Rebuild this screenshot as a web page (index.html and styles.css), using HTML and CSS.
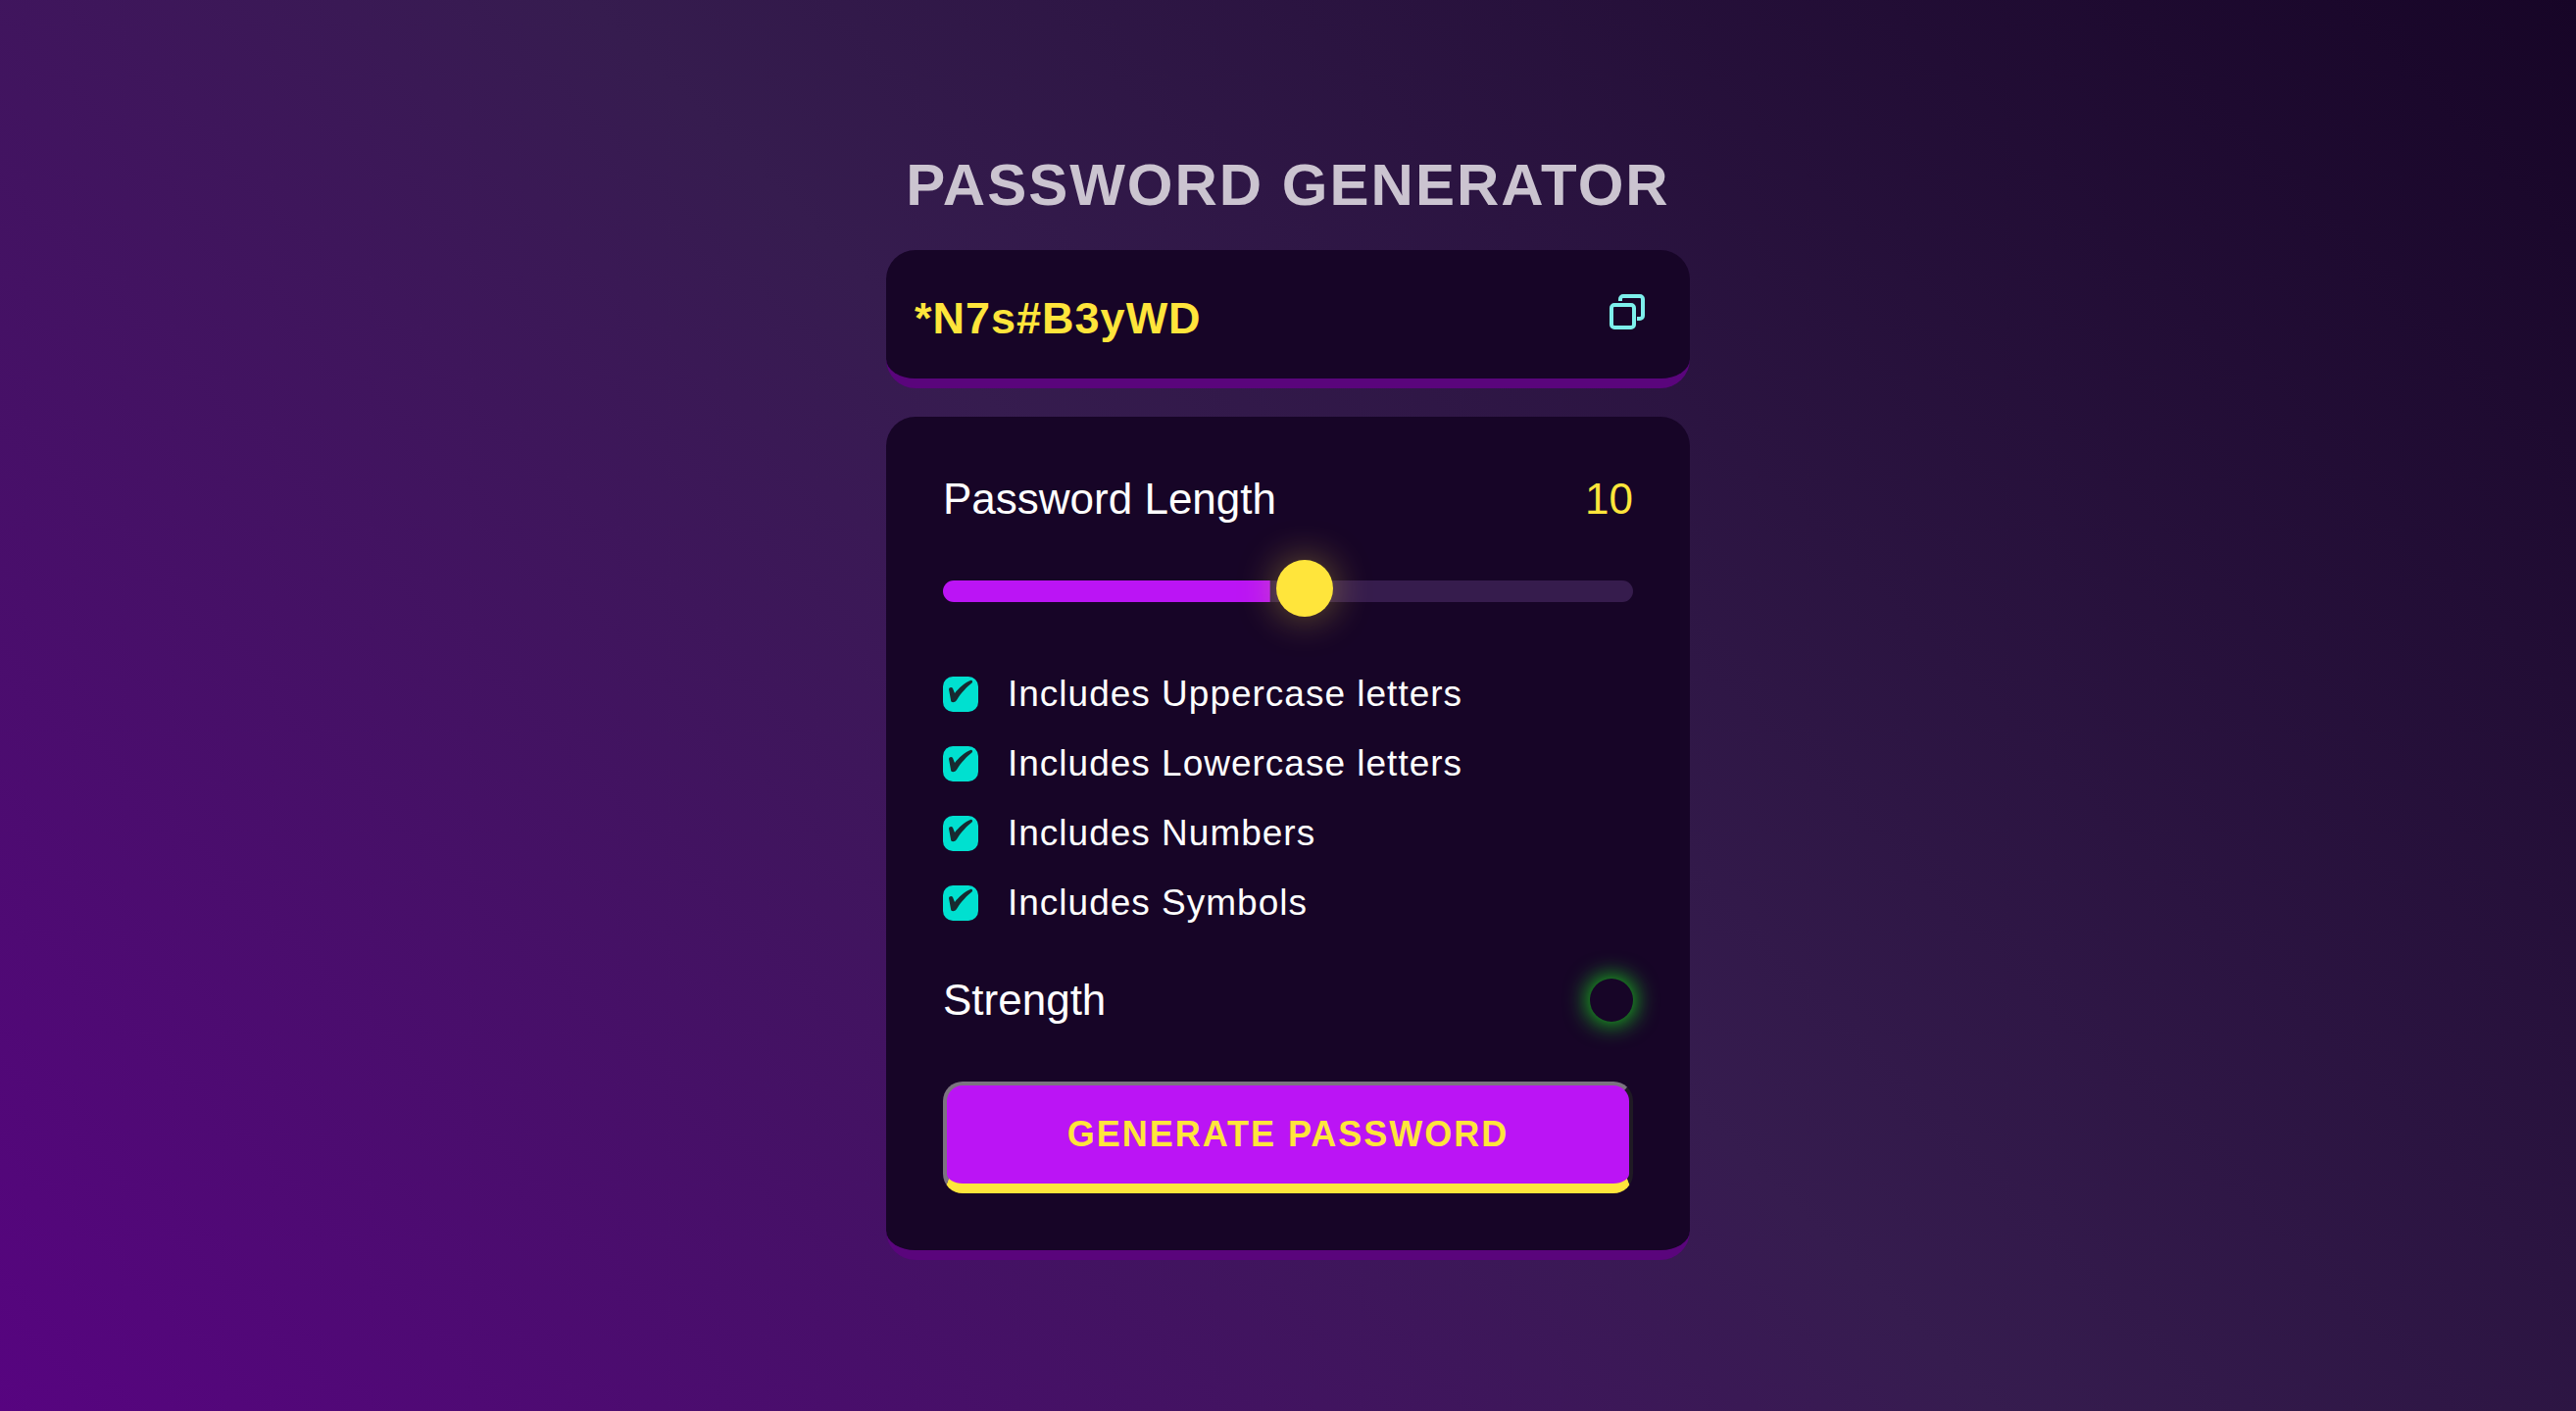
FILE: index.html
```html
<!DOCTYPE html>
<html lang="en">
<head>
  <meta charset="utf-8">
  <meta name="viewport" content="width=device-width, initial-scale=1">
  <title>Password Generator</title>
  <link rel="stylesheet" href="styles.css">
</head>
<body>
  <main class="container">
    <h1 class="title">Password Generator</h1>

    <div class="display">
      <input class="display-password" type="text" value="*N7s#B3yWD" aria-label="Generated password" readonly>
      <button class="copy-button" type="button" aria-label="Copy password">
        <svg class="copy-icon" viewBox="0 0 36 36" fill="none" stroke="currentColor" stroke-width="4" aria-hidden="true">
          <rect x="2" y="11" width="23" height="23" rx="3"/>
          <path d="M11 7V5a3 3 0 0 1 3-3H31a3 3 0 0 1 3 3V22a3 3 0 0 1-3 3H28"/>
        </svg>
      </button>
    </div>

    <form class="settings">
      <div class="row">
        <label class="row-label" for="length">Password Length</label>
        <output class="length-value" for="length">10</output>
      </div>

      <input class="slider" id="length" type="range" min="0" max="19" value="10" style="--fill: 47.4%">

      <div class="options">
        <label class="option"><input class="checkbox" type="checkbox" checked>Includes Uppercase letters</label>
        <label class="option"><input class="checkbox" type="checkbox" checked>Includes Lowercase letters</label>
        <label class="option"><input class="checkbox" type="checkbox" checked>Includes Numbers</label>
        <label class="option"><input class="checkbox" type="checkbox" checked>Includes Symbols</label>
      </div>

      <div class="row">
        <p class="row-label">Strength</p>
        <div class="indicator"></div>
      </div>

      <button class="generate-button" type="button">Generate Password</button>
    </form>
  </main>
</body>
</html>
```
FILE: styles.css
```css
:root {
  --dark: #170527;
  --track: #361c4d;
  --purple: #5a057c;
  --magenta: #bb14f5;
  --yellow: #ffe53b;
  --teal: #00e0d0;
}

* {
  box-sizing: border-box;
  margin: 0;
  padding: 0;
}

body {
  min-height: 100vh;
  display: flex;
  align-items: center;
  justify-content: center;
  background: linear-gradient(45deg, #570480, #361c4f, #170527);
  color: #fff;
  font-family: "Liberation Sans", Helvetica, Arial, sans-serif;
}

.container {
  width: 100%;
  max-width: 820px;
}

.title {
  margin-bottom: 32px;
  color: #cbc4d0;
  font-size: 60px;
  line-height: 69px;
  letter-spacing: 2px;
  text-align: center;
  text-transform: uppercase;
  white-space: nowrap;
}

.display,
.settings {
  border-bottom: 10px solid var(--purple);
  border-radius: 30px;
  background: var(--dark);
}

.display {
  display: flex;
  align-items: center;
  gap: 20px;
  height: 141px;
  margin-bottom: 29px;
  padding: 0 46px 0 29px;
}

.display-password {
  flex: 1;
  min-width: 0;
  border: 0;
  outline: 0;
  background: transparent;
  color: var(--yellow);
  font: bold 45px/52px "Liberation Sans", Helvetica, Arial, sans-serif;
  letter-spacing: 1px;
  padding-top: 8px;
}

.copy-button {
  width: 36px;
  height: 36px;
  margin-bottom: 5px;
  border: 0;
  background: none;
  color: #7ef0ec;
  cursor: pointer;
}

.copy-icon {
  display: block;
  width: 36px;
  height: 36px;
}

.settings {
  display: flex;
  flex-direction: column;
  padding: 58px 58px;
}

.row {
  display: flex;
  align-items: center;
  justify-content: space-between;
}

.row-label,
.length-value {
  font-size: 44px;
  line-height: 52px;
}

.length-value {
  color: var(--yellow);
}

.slider {
  appearance: none;
  width: 100%;
  height: 22px;
  margin: 57px 0 73px;
  border-radius: 12px;
  background: linear-gradient(var(--magenta), var(--magenta)) 0 0 / var(--fill) 100% no-repeat var(--track);
  cursor: pointer;
}

.slider::-webkit-slider-runnable-track {
  height: 22px;
}

.slider::-webkit-slider-thumb {
  appearance: none;
  width: 58px;
  height: 58px;
  margin-top: -21px;
  border-radius: 50%;
  background: var(--yellow);
  box-shadow: 0 0 40px rgba(255, 229, 59, 0.4);
}

.options {
  display: flex;
  flex-direction: column;
  gap: 29px;
  margin-bottom: 52px;
}

.option {
  display: flex;
  align-items: center;
  gap: 30px;
  height: 42px;
  font-size: 37px;
  line-height: 42px;
  letter-spacing: 1px;
}

.checkbox {
  appearance: none;
  width: 36px;
  height: 36px;
  border-radius: 10px;
  background: var(--teal);
  cursor: pointer;
}

.checkbox:checked::before {
  content: "";
  display: block;
  width: 36px;
  height: 36px;
  background: #172a30;
  clip-path: path("M6 13C6 11 9 10 10 12L12 17C16 12 22 6 28 4C30 3 30 5 30 6C25 10 18 17 14 24C12 27 8 27 8 24Z");
}

.indicator {
  width: 44px;
  height: 44px;
  border-radius: 50%;
  box-shadow: 0 0 26px #1bff1b;
}

.generate-button {
  height: 114px;
  margin-top: 57px;
  border: 4px solid #7b7480;
  border-right-color: #1f1a24;
  border-bottom: 10px solid var(--yellow);
  border-radius: 20px;
  background: var(--magenta);
  color: var(--yellow);
  font: bold 36px/42px "Liberation Sans", Helvetica, Arial, sans-serif;
  letter-spacing: 2px;
  text-transform: uppercase;
  cursor: pointer;
}
```
